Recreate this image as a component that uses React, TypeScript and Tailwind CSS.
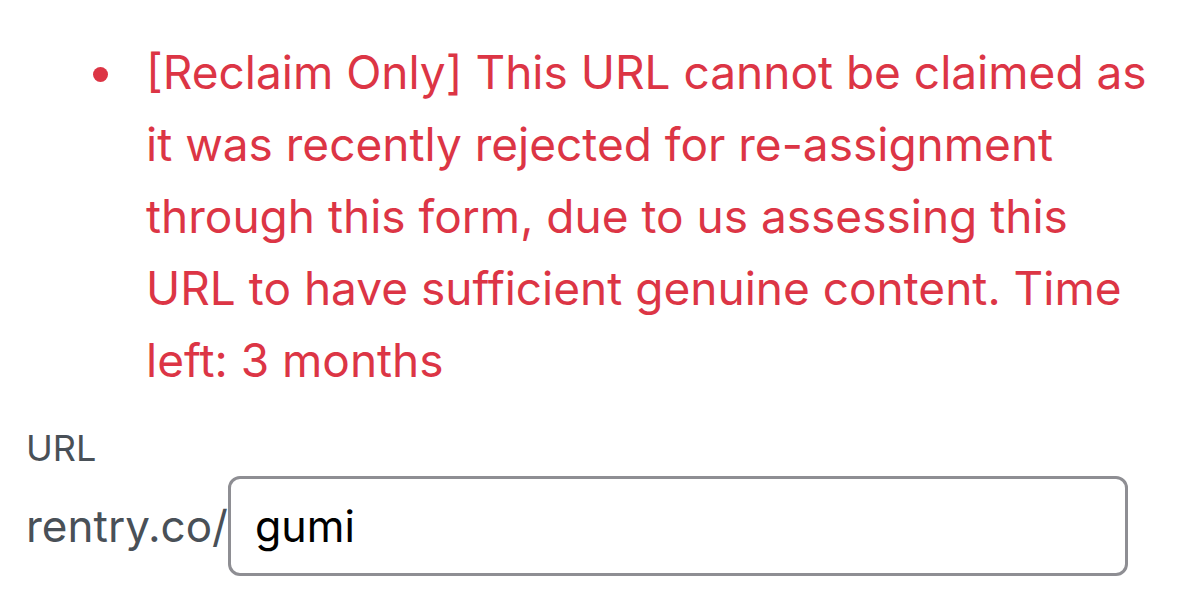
import React from "react";

export default function App() {
  return (
    <div
      className="w-[1179px] h-[600px] bg-white overflow-hidden"
      style={{ fontFamily: "Inter, 'Noto Sans', sans-serif" }}
    >
      <div className="pt-[36px] pl-[26px] pr-[51px]">
        <ul className="pl-[120px] mr-[-27px] list-none">
          <li className="relative text-[46px] leading-[72px] text-[#dc3545]">
            <span className="absolute left-[-53px] top-[31px] w-[15px] h-[15px] rounded-full bg-[#dc3545]" />
            [Reclaim Only] This URL cannot be claimed as it was recently rejected for re-assignment through this form, due to us assessing this URL to have sufficient genuine content. Time left: 3 months
          </li>
        </ul>
        <div className="mt-[32px] text-[36px] leading-[40px] text-[#495057]">URL</div>
        <div className="mt-[8px] flex items-center">
          <span className="text-[44px] text-[#495057] leading-none">rentry.co/</span>
          <div className="flex-1 h-[100px] border-[3px] border-[#8e8e93] rounded-[12px] flex items-center pl-[24px]">
            <span className="text-[43px] text-black leading-none">gumi</span>
          </div>
        </div>
      </div>
    </div>
  );
}
